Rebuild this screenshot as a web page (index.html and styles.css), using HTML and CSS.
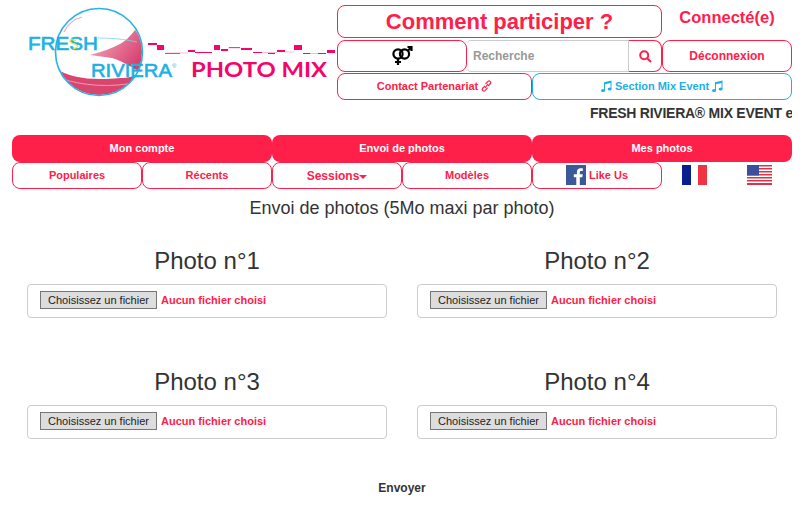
FILE: index.html
```html
<!DOCTYPE html>
<html lang="fr">
<head>
  <meta charset="UTF-8">
  <title>Fresh Riviera Photo Mix</title>
  <link rel="stylesheet" href="styles.css">
</head>
<body>
  <div class="container">
    <div class="header">
      <svg class="logo" width="325" height="100" viewBox="0 0 325 100">
        <defs>
          <linearGradient id="wave" x1="0" y1="0" x2="1" y2="0.6">
            <stop offset="0" stop-color="#f3b4c6"/>
            <stop offset="1" stop-color="#d8406f"/>
          </linearGradient>
          <clipPath id="ball"><circle cx="87" cy="52" r="43"/></clipPath>
        </defs>
        <g clip-path="url(#ball)">
          <path d="M78 55 C90 52 100 48 108 44 C115 40 118 36 123 30 C128 36 132 45 132 60 L128 72 C118 66 108 60 100 58 Z" fill="url(#wave)"/>
          <path d="M40 66 C55 77 75 81 108 78 C118 78 124 76 132 70 L132 100 L40 100 Z" fill="#d9456f"/>
          <path d="M48 78 C70 86 100 88 126 82" fill="none" stroke="#f3b3c6" stroke-width="0.8"/>
        </g>
        <path d="M52 32 C56 24 62 19 70 17" fill="none" stroke="#f0a8bd" stroke-width="1.2"/>
        <path d="M86 38 C100 38 112 39 125 42" fill="none" stroke="#7fd0ef" stroke-width="0.8"/>
        <circle cx="87" cy="52" r="43.5" fill="none" stroke="#27b3e8" stroke-width="1.6"/>
        <text class="logo-fresh" x="16" y="50" textLength="70" lengthAdjust="spacingAndGlyphs">FRESH</text>
        <path d="M64 41 C58 38 56 41 60 43 C66 45 68 47 61 49" fill="none" stroke="#e8e22a" stroke-width="1.2"/>
        <text class="logo-riviera" x="79" y="77" textLength="81" lengthAdjust="spacingAndGlyphs">RIVIERA</text>
        <text class="logo-reg" x="160" y="68">®</text>
        <text class="logo-mix" x="179" y="77" textLength="136" lengthAdjust="spacingAndGlyphs">PHOTO MIX</text>
        <path d="M136 43h9v2h-9zM145 45h7v5h-7zM153 53h15v1h-15zM176 50h7v2h-7zM183 52h10v1h-10zM193 52h7v1h-7zM202 45h6v5h-6zM209 49h7v2h-7zM217 47h11v1h-11zM229 48h11v2h-11zM241 52h9v1h-9zM256 53h7v1h-7zM265 50h8v2h-8zM282 45h8v5h-8zM291 53h7v1h-7zM306 53h8v1h-8zM315 50h8v3h-8z" fill="#f5056b"/>
        <path d="M153 53H176M216 48H229M250 52.500H265M273 52H282M298 53.500H306" fill="none" stroke="#f9a0c4" stroke-width="0.7"/>
      </svg>
      <div class="tools">
        <a class="btn btn-title">Comment participer ?</a>
        <div class="connected">Connecté(e)</div>
        <a class="btn btn-gender">
          <svg width="22" height="20" viewBox="0 0 22 20" fill="none" stroke="#000" stroke-width="2.2">
            <circle cx="7" cy="8" r="4.6"/>
            <circle cx="13.5" cy="8" r="4.6"/>
            <path d="M7 12.6V19M4 16h6M17 4.500L20.500 1M16.500 1h4v4"/>
          </svg>
        </a>
        <div class="search">
          <span class="search-input">Recherche</span>
          <a class="search-btn">
            <svg width="13" height="13" viewBox="0 0 13 13" fill="none" stroke="#ff2049" stroke-width="2">
              <circle cx="5.2" cy="5.2" r="4"/>
              <path d="M8.2 8.2L12 12"/>
            </svg>
          </a>
        </div>
        <a class="btn btn-logout">Déconnexion</a>
        <div class="tools-row">
          <a class="btn btn-contact">Contact Partenariat
            <svg width="11" height="12" viewBox="0 0 11 12" fill="none" stroke="#ff2049" stroke-width="1.2">
              <path d="M4.500 4.200L7 1.400a1.600 1.600 0 0 1 2.400 2.100L7 6.200M6.500 7.800L4 10.600a1.600 1.600 0 0 1-2.400-2.100L4 5.800M4 8l3-4"/>
            </svg>
          </a>
          <a class="btn btn-mix">
            <svg class="note" width="11" height="12" viewBox="0 0 11 12"><path d="M3 2.200L10.500 .5V9h-1V3L4 4.200V10.500H3z"/><ellipse cx="2" cy="10.400" rx="2" ry="1.500"/><ellipse cx="8.600" cy="9" rx="2" ry="1.500"/></svg>
            Section Mix Event
            <svg class="note" width="11" height="12" viewBox="0 0 11 12"><path d="M3 2.200L10.500 .5V9h-1V3L4 4.200V10.500H3z"/><ellipse cx="2" cy="10.400" rx="2" ry="1.500"/><ellipse cx="8.600" cy="9" rx="2" ry="1.500"/></svg>
          </a>
        </div>
      </div>
    </div>

    <div class="ticker">FRESH RIVIERA® MIX EVENT et PHOTO MIX</div>

    <nav class="nav-main">
      <a class="btn-solid">Mon compte</a>
      <a class="btn-solid">Envoi de photos</a>
      <a class="btn-solid">Mes photos</a>
    </nav>
    <nav class="nav-sub">
      <a class="btn">Populaires</a>
      <a class="btn">Récents</a>
      <a class="btn btn-sessions">Sessions<span class="caret"></span></a>
      <a class="btn">Modèles</a>
      <a class="btn btn-like">
        <svg width="20" height="20" viewBox="0 0 20 20">
          <rect width="20" height="20" fill="#3b5998"/>
          <path d="M13.800 20v-7.700h2.500l.4-3h-2.900V7.400c0-.9.3-1.400 1.500-1.400h1.500V3.300c-.3 0-1.200-.1-2.200-.1-2.200 0-3.700 1.300-3.700 3.800v2.300H7.800v3h2.500V20z" fill="#fff"/>
        </svg>
        Like Us
      </a>
      <a class="flag">
        <svg width="25" height="20" viewBox="0 0 25 20">
          <rect width="9" height="20" fill="#0a1f8f"/>
          <rect x="9" width="7" height="20" fill="#fff"/>
          <rect x="16" width="9" height="20" fill="#ef3340"/>
        </svg>
      </a>
      <a class="flag">
        <svg width="25" height="20" viewBox="0 0 25 20">
          <rect width="25" height="20" fill="#fff"/>
          <path d="M0 0h25v1.500H0zM0 3h25v1.500H0zM0 6h25v1.500H0zM0 9h25v1.500H0zM0 12h25v1.500H0zM0 15h25v1.500H0zM0 18h25v2H0z" fill="#d8344a"/>
          <rect width="12" height="10.500" fill="#3c4f9c"/>
        </svg>
      </a>
    </nav>

    <h2 class="page-title">Envoi de photos (5Mo maxi par photo)</h2>

    <form class="uploads">
      <div class="upload">
        <h3>Photo n°1</h3>
        <div class="file-box"><button type="button" class="file-btn">Choisissez un fichier</button><span class="file-name">Aucun fichier choisi</span></div>
      </div>
      <div class="upload">
        <h3>Photo n°2</h3>
        <div class="file-box"><button type="button" class="file-btn">Choisissez un fichier</button><span class="file-name">Aucun fichier choisi</span></div>
      </div>
      <div class="upload">
        <h3>Photo n°3</h3>
        <div class="file-box"><button type="button" class="file-btn">Choisissez un fichier</button><span class="file-name">Aucun fichier choisi</span></div>
      </div>
      <div class="upload">
        <h3>Photo n°4</h3>
        <div class="file-box"><button type="button" class="file-btn">Choisissez un fichier</button><span class="file-name">Aucun fichier choisi</span></div>
      </div>
    </form>

    <div class="submit">Envoyer</div>
  </div>
</body>
</html>
```

FILE: styles.css
```css
* { box-sizing: border-box; }
body {
  margin: 0;
  background: #fff;
  color: #333;
  font-family: "Liberation Sans", Arial, sans-serif;
  font-size: 12px;
}
a { color: #ff2049; }
.container {
  width: 780px;
  margin: 0 12px;
  overflow: hidden;
}
.header {
  display: flex;
  height: 100px;
  padding-top: 5px;
}
.logo {
  flex: none;
  margin-top: -5px;
}
.logo-fresh {
  fill: #1cb0e6;
  stroke: #1cb0e6;
  stroke-width: 0.6px;
  font-family: "Liberation Sans", Arial, sans-serif;
  font-size: 18px;
}
.logo-riviera {
  fill: #1cb0e6;
  stroke: #1cb0e6;
  stroke-width: 0.6px;
  font-family: "Liberation Sans", Arial, sans-serif;
  font-size: 19px;
}
.logo-reg {
  fill: #1cb0e6;
  font-size: 6px;
}
.logo-mix {
  fill: #f5056b;
  font-family: Lato, Arial, sans-serif;
  font-size: 21px;
  font-weight: bold;
}
.tools {
  width: 455px;
  display: grid;
  grid-template-columns: 130px 195px 130px;
  grid-template-rows: 33px 33px 27px;
  row-gap: 1px;
}
.btn {
  display: flex;
  align-items: center;
  justify-content: center;
  gap: 3px;
  padding-bottom: 1px;
  border: 1px solid #ff2049;
  border-radius: 8px;
  background: #fff;
  color: #ff2049;
  font-weight: bold;
  font-size: 11px;
}
.btn-title {
  grid-column: 1 / 3;
  padding-bottom: 0;
  font-size: 22px;
}
.connected {
  color: #ff2049;
  font-size: 16.5px;
  font-weight: bold;
  text-align: center;
  padding-top: 3px;
}
.btn-gender { margin-top: 1px; height: 32px; }
.btn-logout {
  font-size: 12px;
  margin-top: 1px;
  height: 32px;
}
.search {
  display: flex;
  margin-top: 1px;
  height: 32px;
}
.search-input {
  flex: 1;
  padding: 0 6px;
  display: flex;
  align-items: center;
  border: 1px solid #ccc;
  border-width: 1px 0 1px 0;
  border-radius: 4px 0 0 4px;
  color: #999;
  font-weight: bold;
}
.search-btn {
  width: 34px;
  display: flex;
  align-items: center;
  justify-content: center;
  border: 1px solid #ff2049;
  border-left-color: #ccc;
  border-radius: 0 8px 8px 0;
}
.tools-row {
  grid-column: 1 / 4;
  display: grid;
  grid-template-columns: 195px 260px;
}
.btn-mix {
  border-color: #1cb0e6;
  color: #1cb0e6;
}
.note { fill: #1cb0e6; }
.ticker {
  height: 35px;
  padding: 5px 0 0 578px;
  white-space: nowrap;
  font-size: 14px;
  font-weight: bold;
  letter-spacing: -0.25px;
  line-height: 16px;
  color: #333;
}
.nav-main {
  display: grid;
  grid-template-columns: repeat(3, 260px);
  height: 27px;
}
.btn-solid {
  display: flex;
  align-items: center;
  justify-content: center;
  padding-bottom: 2px;
  background: #ff2049;
  border-radius: 8px;
  color: #fff;
  font-size: 11px;
  font-weight: bold;
}
.nav-sub {
  display: grid;
  grid-template-columns: repeat(5, 130px) repeat(2, 65px);
  height: 27px;
}
.btn-sessions { padding-bottom: 0; font-size: 12px; gap: 0; }
.caret {
  border-top: 4px solid #ff2049;
  border-left: 4px solid transparent;
  border-right: 4px solid transparent;
  margin-top: 2px;
}
.flag {
  display: flex;
  align-items: center;
  justify-content: center;
  padding-bottom: 1px;
}
.page-title {
  margin: 9px 0 0;
  text-align: center;
  font-size: 18px;
  font-weight: normal;
  line-height: 20px;
}
.uploads {
  display: grid;
  grid-template-columns: 390px 390px;
  row-gap: 51px;
  margin-top: 30px;
}
.upload { padding: 0 15px; }
.upload h3 {
  margin: 0 0 10px;
  text-align: center;
  font-size: 24px;
  font-weight: normal;
  line-height: 26px;
}
.file-box {
  display: flex;
  align-items: center;
  height: 34px;
  padding: 0 12px 2px;
  border: 1px solid #ccc;
  border-radius: 4px;
  font-size: 11px;
}
.file-btn {
  width: 117px;
  height: 18px;
  padding: 0;
  margin-right: 4px;
  border: 1px solid #767676;
  background: #ddd;
  color: #222;
  font-family: "Liberation Sans", Arial, sans-serif;
  font-size: 11px;
}
.file-name {
  color: #ff2049;
  font-weight: bold;
}
.submit {
  margin-top: 42px;
  text-align: center;
  font-weight: bold;
  line-height: 14px;
  color: #333;
}
```
